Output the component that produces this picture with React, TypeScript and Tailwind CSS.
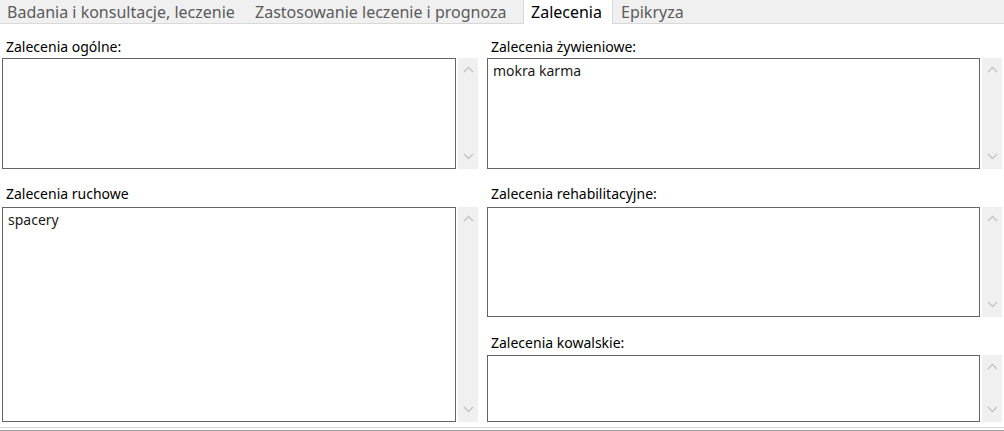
const tabs = [
  { label: "Badania i konsultacje, leczenie", w: "w-[248px]", pl: "pl-[7px]" },
  { label: "Zastosowanie leczenie i prognoza", w: "w-[275px]", pl: "pl-[7px]" },
  { label: "Zalecenia", w: "w-[90px]", pl: "pl-[7px]", active: true },
  { label: "Epikryza", w: "w-[100px]", pl: "pl-[8px]" },
];

function Chevron({ down }: { down?: boolean }) {
  return (
    <svg width="11" height="7" viewBox="0 0 11 7" className="block">
      <path
        d={down ? "M1 1 L5.5 5.5 L10 1" : "M1 6 L5.5 1.5 L10 6"}
        fill="none"
        stroke="#c4c4c4"
        strokeWidth="1.4"
      />
    </svg>
  );
}

function Field({ label, value, h, labelH, pb }: { label: string; value?: string; h: string; labelH: string; pb: string }) {
  return (
    <>
      <div className={`${labelH} ${pb} flex items-end pl-[4px] text-[14px] leading-[17px] text-black`}>{label}</div>
      <div className={`${h} flex`}>
        <div className="flex-1 border border-[#646464] bg-white px-[5px] pt-[3px] text-[14px] leading-[17px] text-[#1a1a1a]">
          {value}
        </div>
        <div className="ml-[2px] flex w-[20px] flex-col items-center justify-between bg-[#f0f0f0] pt-[8px] pb-[9px]">
          <Chevron />
          <Chevron down />
        </div>
      </div>
    </>
  );
}

export default function App() {
  return (
    <div className="h-[431px] w-[1004px] overflow-hidden bg-white" style={{ fontFamily: '"Noto Sans", "Open Sans", sans-serif' }}>
      <div className="flex h-[24px] border-b border-[#d9d9d9] bg-[#f0f0f0]">
        {tabs.map((t) => (
          <div
            key={t.label}
            className={`${t.w} ${t.pl} flex h-[24px] shrink-0 items-center whitespace-nowrap text-[16px] ${
              t.active ? "border-x border-[#d9d9d9] bg-white text-black" : "text-[#5b5b5b]"
            }`}
          >
            {t.label}
          </div>
        ))}
      </div>

      <div className="grid grid-cols-[476px_515px] gap-x-[9px] px-[2px]">
        <div className="flex flex-col">
          <Field label="Zalecenia ogólne:" h="h-[111px]" labelH="h-[34px]" pb="pb-[3px]" />
          <Field label="Zalecenia ruchowe" value="spacery" h="h-[215px]" labelH="h-[38px]" pb="pb-[5px]" />
        </div>
        <div className="flex flex-col">
          <Field label="Zalecenia żywieniowe:" value="mokra karma" h="h-[111px]" labelH="h-[34px]" pb="pb-[3px]" />
          <Field label="Zalecenia rehabilitacyjne:" h="h-[110px]" labelH="h-[38px]" pb="pb-[5px]" />
          <Field label="Zalecenia kowalskie:" h="h-[67px]" labelH="h-[38px]" pb="pb-[4px]" />
        </div>
      </div>

      <div className="mt-[5px] h-px bg-[#d4d4d4]" />
      <div className="mt-[2px] h-px bg-[#a0a0a0]" />
    </div>
  );
}
